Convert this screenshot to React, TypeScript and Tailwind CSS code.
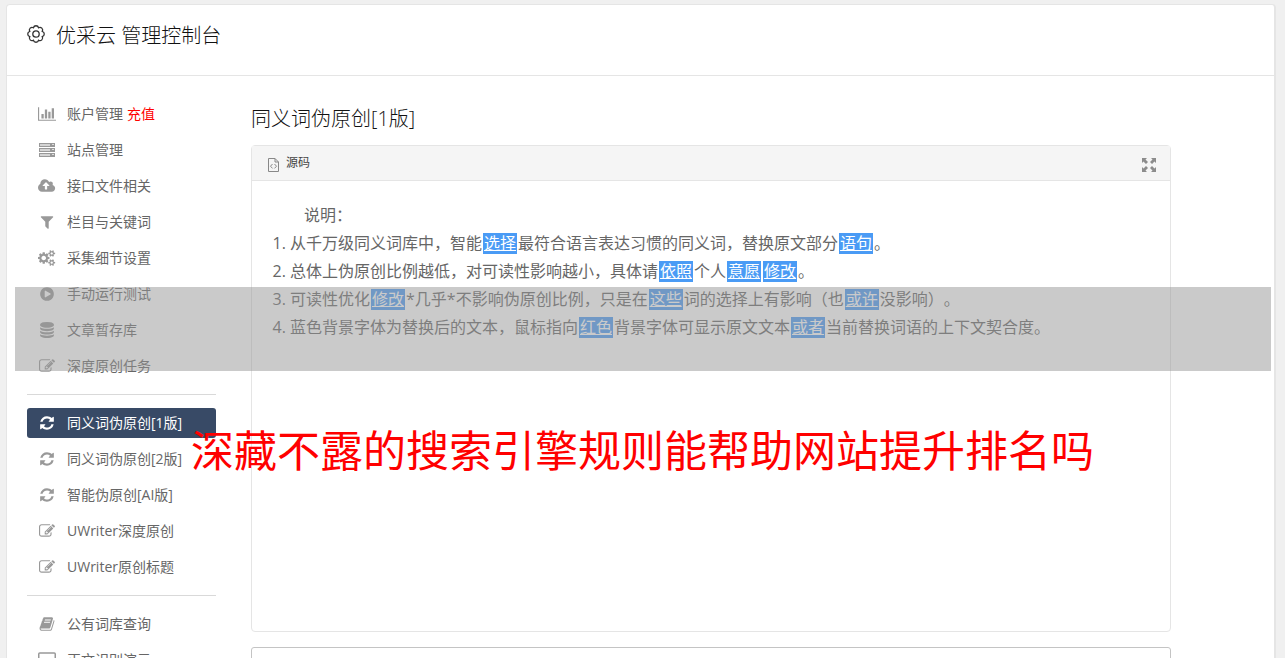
import type { ReactNode } from 'react';
import clsx from 'clsx';

interface IconProps {
  path: string;
  width?: number;
}

interface MenuItem {
  label: string;
  icon: ReactNode;
  badge?: string;
  active?: boolean;
}

function Icon({ path, width = 1792 }: IconProps) {
  return (
    <svg viewBox={`0 0 ${width} 1792`} className="h-4 w-auto" fill="currentColor" aria-hidden="true">
      <path d={path} />
    </svg>
  );
}

const BAR_CHART =
  'M640 896v512h-256v-512h256zm384-512v1024h-256v-1024h256zm1024 1152v128h-2048v-1536h128v1408h1920zm-640-896v768h-256v-768h256zm384-384v1152h-256v-1152h256z';
const CLOUD_UPLOAD =
  'M1280 864q0-14-9-23l-352-352q-9-9-23-9t-23 9l-351 351q-10 12-10 24 0 14 9 23t23 9h224v352q0 13 9.5 22.5t22.5 9.5h192q13 0 22.5-9.5t9.5-22.5v-352h224q13 0 22.5-9.5t9.5-22.5zm640 288q0 159-112.5 271.5t-271.5 112.5h-1088q-185 0-316.5-131.5t-131.5-316.5q0-130 70-240t188-165q-2-30-2-43 0-212 150-362t362-150q156 0 285.5 87t188.5 231q71-62 166-62 106 0 181 75t75 181q0 76-41 138 130 31 213.5 135.5t83.5 238.5z';
const FILTER =
  'M1595 295q17 41-14 70l-493 493v742q0 42-39 59-13 5-25 5-27 0-45-19l-256-256q-19-19-19-45v-486l-493-493q-31-29-14-70 17-39 59-39h1280q42 0 59 39z';
const COGS =
  'M896 896q0-106-75-181t-181-75-181 75-75 181 75 181 181 75 181-75 75-181zm768 512q0-52-38-90t-90-38-90 38-38 90q0 53 37.5 90.5t90.5 37.5 90.5-37.5 37.5-90.5zm0-1024q0-52-38-90t-90-38-90 38-38 90q0 53 37.5 90.5t90.5 37.5 90.5-37.5 37.5-90.5zm-384 421v185q0 10-7 19.5t-16 10.5l-155 24q-11 35-32 76 34 48 90 115 7 11 7 20 0 12-7 19-23 30-82.5 89.5t-78.5 59.5q-11 0-21-7l-115-90q-37 19-77 31-11 108-23 155-7 24-30 24h-186q-11 0-20-7.5t-10-17.5l-23-153q-34-10-75-31l-118 89q-7 7-20 7-11 0-21-8-144-133-144-160 0-9 7-19 10-14 41-53t47-61q-23-44-35-82l-152-24q-10-1-17-9.5t-7-19.5v-185q0-10 7-19.5t16-10.5l155-24q11-35 32-76-34-48-90-115-7-11-7-20 0-12 7-20 22-30 82-89t79-59q11 0 21 7l115 90q34-18 77-32 11-108 23-154 7-24 30-24h186q11 0 20 7.5t10 17.5l23 153q34 10 75 31l118-89q8-7 20-7 11 0 21 8 144 133 144 160 0 8-7 19-12 16-42 54t-45 60q23 48 34 82l152 23q10 2 17 10.5t7 19.5zm640 533v140q0 16-149 31-12 27-30 52 51 113 51 138 0 4-4 7-122 71-124 71-8 0-46-47t-52-68q-20 2-30 2t-30-2q-14 21-52 68t-46 47q-2 0-124-71-4-3-4-7 0-25 51-138-18-25-30-52-149-15-149-31v-140q0-16 149-31 13-29 30-52-51-113-51-138 0-4 4-7 4-2 35-20t59-34 30-16q8 0 46 46.5t52 67.5q20-2 30-2t30 2q51-71 92-112l6-2q4 0 124 70 4 3 4 7 0 25-51 138 17 23 30 52 149 15 149 31zm0-1024v140q0 16-149 31-12 27-30 52 51 113 51 138 0 4-4 7-122 71-124 71-8 0-46-47t-52-68q-20 2-30 2t-30-2q-14 21-52 68t-46 47q-2 0-124-71-4-3-4-7 0-25 51-138-18-25-30-52-149-15-149-31v-140q0-16 149-31 13-29 30-52-51-113-51-138 0-4 4-7 4-2 35-20t59-34 30-16q8 0 46 46.5t52 67.5q20-2 30-2t30 2q51-71 92-112l6-2q4 0 124 70 4 3 4 7 0 25-51 138 17 23 30 52 149 15 149 31z';
const PLAY =
  'M896 128q209 0 385.5 103t279.5 279.5 103 385.5-103 385.5-279.5 279.5-385.5 103-385.5-103-279.5-279.5-103-385.5 103-385.5 279.5-279.5 385.5-103zm384 823q32-18 32-55t-32-55l-544-320q-31-19-64-1-32 19-32 56v640q0 37 32 56 16 8 32 8 17 0 32-9z';
const DATABASE =
  'M896 768q237 0 443-43t325-127v170q0 69-103 128t-280 93.5-385 34.5-385-34.5-280-93.5-103-128v-170q119 84 325 127t443 43zm0 768q237 0 443-43t325-127v170q0 69-103 128t-280 93.5-385 34.5-385-34.5-280-93.5-103-128v-170q119 84 325 127t443 43zm0-384q237 0 443-43t325-127v170q0 69-103 128t-280 93.5-385 34.5-385-34.5-280-93.5-103-128v-170q119 84 325 127t443 43zm0-1152q208 0 385 34.5t280 93.5 103 128v128q0 69-103 128t-280 93.5-385 34.5-385-34.5-280-93.5-103-128v-128q0-69 103-128t280-93.5 385-34.5z';
const EDIT =
  'M888 1184l116-116-152-152-116 116v56h96v96h56zm440-720q-16-16-33 1l-350 350q-17 17-1 33t33-1l350-350q17-17 1-33zm80 594v190q0 119-84.5 203.5t-203.5 84.5h-832q-119 0-203.5-84.5t-84.5-203.5v-832q0-119 84.5-203.5t203.5-84.5h832q63 0 117 25 15 7 18 23 3 17-9 29l-49 49q-14 14-32 8-23-6-45-6h-832q-66 0-113 47t-47 113v832q0 66 47 113t113 47h832q66 0 113-47t47-113v-126q0-13 9-22l64-64q15-15 35-7t20 29zm-96-738l288 288-672 672h-288v-288zm444 132l-92 92-288-288 92-92q28-28 68-28t68 28l152 152q28 28 28 68t-28 68z';
const REFRESH =
  'M1639 1056q0 5-1 7-64 268-268 434.5t-478 166.5q-146 0-282.5-55t-243.5-157l-129 129q-19 19-45 19t-45-19-19-45v-448q0-26 19-45t45-19h448q26 0 45 19t19 45-19 45l-137 137q71 66 161 102t187 36q134 0 250-65t186-179q11-17 53-117 8-23 30-23h192q13 0 22.5 9.5t9.5 22.5zm25-800v448q0 26-19 45t-45 19h-448q-26 0-45-19t-19-45 19-45l138-138q-148-137-349-137-134 0-250 65t-186 179q-11 17-53 117-8 23-30 23h-199q-13 0-22.5-9.5t-9.5-22.5v-7q65-268 270-434.5t480-166.5q146 0 284 55.5t245 156.5l130-129q19-19 45-19t45 19 19 45z';
const BOOK =
  'M1703 478q40 57 18 129l-275 906q-19 64-76.5 107.5t-122.5 43.5h-923q-77 0-148.5-53.5t-99.5-131.5q-24-67-2-127 0-4 3-27t4-37q1-8-3-21.5t-3-19.5q2-11 8-21t16.5-23.5 16.5-23.5q23-38 45-91.5t30-91.5q3-10 .5-30t-.5-28q3-11 17-28t17-23q21-36 42-92t25-90q1-9-2.5-32t.5-28q4-13 22-30.5t22-22.5q19-26 42.5-84.5t27.5-96.5q1-8-3-25.5t-2-26.5q2-8 9-18t18-23 17-21q8-12 16.5-30.5t15-35 16-36 19.5-32 26.5-23.5 36-11.5 47.5 5.5l-1 3q38-9 51-9h761q74 0 114 56t18 130l-274 906q-36 119-71.5 153.5t-128.5 34.5h-869q-27 0-38 15-11 16-1 43 24 70 144 70h923q29 0 56-15.5t35-41.5l300-987q7-22 5-57 38 15 59 43zm-1064 2q-4 13 2 22.5t20 9.5h608q13 0 25.5-9.5t16.5-22.5l21-64q4-13-2-22.5t-20-9.5h-608q-13 0-25.5 9.5t-16.5 22.5zm-83 256q-4 13 2 22.5t20 9.5h608q13 0 25.5-9.5t16.5-22.5l21-64q4-13-2-22.5t-20-9.5h-608q-13 0-25.5 9.5t-16.5 22.5z';

function ServerIcon() {
  return (
    <svg viewBox="0 0 16 16" className="h-4 w-4" aria-hidden="true">
      {[1, 6, 11].map((y) => (
        <g key={y}>
          <rect x="0" y={y} width="16" height="4" fill="currentColor" />
          <rect x="1" y={y + 1} width="10" height="2" fill="#d4d4d4" />
          <rect x="13" y={y + 1} width="2" height="1" fill="#ddd" />
        </g>
      ))}
    </svg>
  );
}

function DesktopIcon() {
  return (
    <svg viewBox="0 0 18 16" className="h-4 w-auto" fill="none" stroke="currentColor" aria-hidden="true">
      <rect x="0.75" y="1" width="16.5" height="11" rx="1" strokeWidth="1.5" />
      <path d="M5 15h8M9 12v3" strokeWidth="1.5" />
    </svg>
  );
}

function GearIcon() {
  // eight lobes around a circle
  const points = Array.from({ length: 8 }, (_, i) => {
    const angle = ((i * 45 + 22.5) * Math.PI) / 180;
    return `${(9 + 6.8 * Math.cos(angle)).toFixed(2)} ${(9 + 6.8 * Math.sin(angle)).toFixed(2)}`;
  });
  const d = `M${points[7]}` + points.map((p) => `A2.7 2.7 0 0 1 ${p}`).join('') + 'Z';

  return (
    <svg viewBox="0 0 18 18" className="h-[18px] w-[18px]" fill="none" stroke="currentColor" strokeWidth="1.3" aria-hidden="true">
      <path d={d} />
      <circle cx="9" cy="9" r="3.2" />
    </svg>
  );
}

const groups: MenuItem[][] = [
  [
    { label: '账户管理', icon: <Icon path={BAR_CHART} width={2048} />, badge: '充值' },
    { label: '站点管理', icon: <ServerIcon /> },
    { label: '接口文件相关', icon: <Icon path={CLOUD_UPLOAD} width={1920} /> },
    { label: '栏目与关键词', icon: <Icon path={FILTER} /> },
    { label: '采集细节设置', icon: <Icon path={COGS} width={1920} /> },
    { label: '手动运行测试', icon: <Icon path={PLAY} /> },
    { label: '文章暂存库', icon: <Icon path={DATABASE} /> },
    { label: '深度原创任务', icon: <Icon path={EDIT} /> },
  ],
  [
    { label: '同义词伪原创[1版]', icon: <Icon path={REFRESH} />, active: true },
    { label: '同义词伪原创[2版]', icon: <Icon path={REFRESH} /> },
    { label: '智能伪原创[AI版]', icon: <Icon path={REFRESH} /> },
    { label: 'UWriter深度原创', icon: <Icon path={EDIT} /> },
    { label: 'UWriter原创标题', icon: <Icon path={EDIT} /> },
  ],
  [
    { label: '公有词库查询', icon: <Icon path={BOOK} /> },
    { label: '正文识别演示', icon: <DesktopIcon /> },
  ],
];

function Sidebar() {
  return (
    <nav className="w-[189px] shrink-0">
      {groups.map((items, index) => (
        <ul
          key={index}
          className={clsx('flex flex-col gap-1.5', index > 0 && 'mt-[13px] border-t border-[#d9d9d9] pt-[13px]')}
        >
          {items.map((item) => (
            <li key={item.label}>
              <a
                href="#"
                className={clsx(
                  'flex h-[30px] items-center rounded-[3px] text-sm whitespace-nowrap',
                  item.active ? 'bg-[#384a66] text-white' : 'text-[#666]',
                )}
              >
                <span className={clsx('flex w-10 justify-center', item.active ? 'text-white' : 'text-[#999]')}>
                  {item.icon}
                </span>
                {item.label}
                {item.badge && <span className="ml-1 text-[#f00]">{item.badge}</span>}
              </a>
            </li>
          ))}
        </ul>
      ))}
    </nav>
  );
}

function Word({ children }: { children: ReactNode }) {
  return (
    <span className="mx-px inline-block h-[21px] bg-[#4a9bf5] px-px leading-[21px] text-white underline">
      {children}
    </span>
  );
}

function Editor() {
  return (
    <div className="rounded-[4px] border border-[#e5e5e5]">
      <div className="flex h-[35px] items-center justify-between border-b border-[#e5e5e5] bg-[#f5f5f5] pr-3.5 pl-4">
        <button type="button" className="flex items-center gap-[7px] text-xs text-[#444]">
          <svg viewBox="0 0 11 14" className="mt-1 h-3.5 w-[11px]" fill="none" stroke="#888" aria-hidden="true">
            <path d="M.5.5h6.500l3.500 3.500v9.500h-10zM7 .5v3.500h3.500" />
            <path d="M4.500 6l-2 2.200 2 2.200M6.500 6l2 2.200-2 2.200" />
          </svg>
          源码
        </button>
        <button type="button" aria-label="全屏" className="pt-1 text-[#8c8c8c]">
          <svg viewBox="0 0 14 14" className="h-3.5 w-3.5" fill="currentColor" aria-hidden="true">
            {[0, 90, 180, 270].map((angle) => (
              <path key={angle} d="M0 0h5L3.500 1.500 6 4 4 6 1.500 3.500 0 5z" transform={`rotate(${angle} 7 7)`} />
            ))}
          </svg>
        </button>
      </div>
      <div className="h-[450px] px-5 py-5 text-base leading-7 text-[#666] [text-spacing-trim:space-all]">
        <p className="indent-8">说明：</p>
        <ol className="list-decimal pl-[18px]">
          <li>
            从千万级同义词库中，智能<Word>选择</Word>最符合语言表达习惯的同义词，替换原文部分<Word>语句</Word>。
          </li>
          <li>
            总体上伪原创比例越低，对可读性影响越小，具体请<Word>依照</Word>个人<Word>意愿</Word>
            <Word>修改</Word>。
          </li>
          <li>
            可读性优化<Word>修改</Word>*几乎*不影响伪原创比例，只是在<Word>这些</Word>词的选择上有影响（也<Word>或许</Word>没影响）。
          </li>
          <li>
            蓝色背景字体为替换后的文本，鼠标指向<Word>红色</Word>背景字体可显示原文文本<Word>或者</Word>当前替换词语的上下文契合度。
          </li>
        </ol>
      </div>
    </div>
  );
}

export default function App() {
  return (
    <div className="relative h-screen overflow-hidden bg-[#f0f0f0] pt-1 pr-[9px] pl-1.5 font-['Open_Sans','Noto_Sans_CJK_SC',sans-serif]">
      <div className="min-h-full rounded-t-[4px] border border-r-2 border-[#e5e5e5] bg-white">
        <header className="flex h-[71px] items-start gap-[11px] border-b border-[#e5e5e5] px-5 pt-4 text-[#333]">
          <span className="pt-1">
            <GearIcon />
          </span>
          <h1 className="text-xl leading-[30px] font-light text-[#111]">优采云 管理控制台</h1>
        </header>

        <div className="flex gap-[35px] pt-[23px] pl-5">
          <Sidebar />
          <main className="mr-[103px] min-w-0 flex-1">
            <h2 className="mt-[5px] mb-[11px] text-xl leading-[30px] font-light text-[#111]">同义词伪原创[1版]</h2>
            <Editor />
            <textarea
              aria-label="原文"
              className="mt-[15px] block h-40 w-full resize-none rounded-[3px] border border-[#c4c4c4] bg-white p-3"
            />
          </main>
        </div>
      </div>

      {/* Banner and caption over the page */}
      <div className="absolute top-[287px] right-3.5 left-[15px] h-[84px] bg-[#959595]/50" />
      <p className="absolute top-[419px] left-[191px] text-[43px] leading-[64px] whitespace-nowrap text-[#f00]">
        深藏不露的搜索引擎规则能帮助网站提升排名吗
      </p>
    </div>
  );
}
